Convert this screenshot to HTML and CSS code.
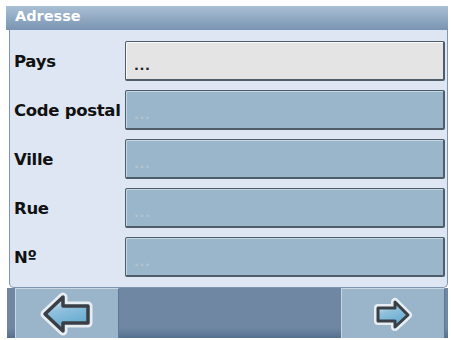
FILE: index.html
```html
<!DOCTYPE html>
<html lang="fr">
<head>
    <meta charset="UTF-8">
    <title>Adresse</title>
    <link rel="stylesheet" href="styles.css">
</head>
<body>
    <div class="screen">
        <div class="title">Adresse</div>
        <div class="panel">
            <div class="row">
                <span class="label">Pays</span>
                <div class="field active">...</div>
            </div>
            <div class="row">
                <span class="label">Code postal</span>
                <div class="field">...</div>
            </div>
            <div class="row">
                <span class="label">Ville</span>
                <div class="field">...</div>
            </div>
            <div class="row">
                <span class="label">Rue</span>
                <div class="field">...</div>
            </div>
            <div class="row">
                <span class="label">Nº</span>
                <div class="field">...</div>
            </div>
        </div>
        <div class="footer">
            <button class="nav">
                <svg width="54" height="44" viewBox="0 0 54 44">
                    <defs>
                        <linearGradient id="fillL" x1="0" y1="0" x2="0.4" y2="1">
                            <stop offset="0" stop-color="#eef3f7"/>
                            <stop offset="0.45" stop-color="#8fc0dc"/>
                            <stop offset="1" stop-color="#64aad1"/>
                        </linearGradient>
                    </defs>
                    <path d="M5 22 L23 5 L23 14 L48 14 L48 31 L23 31 L23 39 Z" fill="none" stroke="#e6eef4" stroke-width="9" stroke-linejoin="round"/>
                    <path d="M5 22 L23 5 L23 14 L48 14 L48 31 L23 31 L23 39 Z" fill="url(#fillL)" stroke="#3a3f45" stroke-width="3.5" stroke-linejoin="round"/>
                </svg>
            </button>
            <div class="spacer"></div>
            <button class="nav">
                <svg width="40" height="34" viewBox="0 0 40 34">
                    <defs>
                        <linearGradient id="fillR" x1="0" y1="0" x2="0.4" y2="1">
                            <stop offset="0" stop-color="#eef3f7"/>
                            <stop offset="0.45" stop-color="#8fc0dc"/>
                            <stop offset="1" stop-color="#64aad1"/>
                        </linearGradient>
                    </defs>
                    <path d="M35 18 L22 5 L22 11 L5 11 L5 24 L22 24 L22 30 Z" fill="none" stroke="#e6eef4" stroke-width="8" stroke-linejoin="round"/>
                    <path d="M35 18 L22 5 L22 11 L5 11 L5 24 L22 24 L22 30 Z" fill="url(#fillR)" stroke="#3a3f45" stroke-width="3" stroke-linejoin="round"/>
                </svg>
            </button>
        </div>
    </div>
</body>
</html>
```

FILE: styles.css
```css
:root {
    --panel-bg: #dde6f2;
    --field-bg: #9ab6ca;
    --field-active-bg: #e4e4e4;
    --field-border: #4f5d6b;
    --footer-bg: #6f87a3;
    --button-bg: #9ab4c9;
}

body {
    margin: 0;
    padding: 0;
    background-color: #fff;
    font-family: 'DejaVu Sans', Verdana, sans-serif;
}

.screen {
    width: 442px;
    height: 332px;
    margin: 6px 0 0 6px;
    display: flex;
    flex-direction: column;
}

.title {
    height: 24px;
    line-height: 20px;
    padding-left: 9px;
    color: #fff;
    font-weight: bold;
    font-size: 14.5px;
    background: linear-gradient(#a9bfd5, #7994b2);
    box-sizing: border-box;
}

.panel {
    margin-left: 3px;
    height: 258px;
    padding: 11px 0 0 4px;
    background-color: var(--panel-bg);
    border: 1px solid #7f95ad;
    border-top: none;
    border-radius: 0 0 5px 5px;
    box-sizing: border-box;
    display: flex;
    flex-direction: column;
    gap: 9px;
}

.row {
    display: flex;
    align-items: center;
    height: 40px;
}

.label {
    width: 111px;
    font-weight: bold;
    font-size: 16.5px;
    color: #111;
    letter-spacing: -0.3px;
    white-space: nowrap;
}

.field {
    width: 320px;
    height: 40px;
    box-sizing: border-box;
    border: 1px solid var(--field-border);
    border-right-width: 2px;
    border-bottom-width: 2px;
    border-radius: 2px;
    background-color: var(--field-bg);
    box-shadow: inset 1px 1px 0 #c5d5e1;
    color: #b3c3d0;
    font-weight: bold;
    font-size: 13px;
    padding: 17px 0 0 8px;
    line-height: 13px;
    letter-spacing: 0.5px;
}

.field.active {
    background-color: var(--field-active-bg);
    box-shadow: inset 1px 1px 0 #fafafa;
    color: #222;
}

.footer {
    flex: 1;
    margin-left: 1px;
    display: flex;
    padding-left: 8px;
    padding-right: 3px;
    background: linear-gradient(var(--footer-bg) 80%, #55708e);
}

.nav {
    width: 104px;
    padding: 0;
    border: 1px solid #c9d7e3;
    border-right-color: #5f7792;
    border-bottom: none;
    background-color: var(--button-bg);
    display: flex;
    align-items: center;
    justify-content: center;
}

.spacer {
    flex: 1;
}
```
